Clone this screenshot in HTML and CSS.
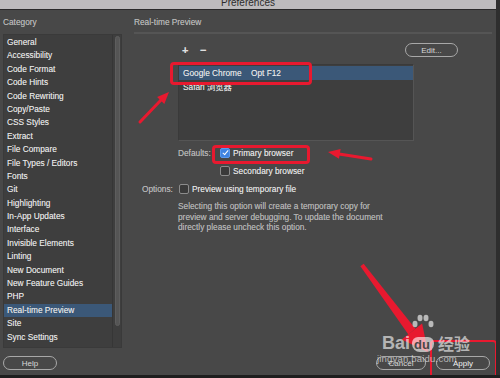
FILE: index.html
```html
<!DOCTYPE html>
<html lang="en">
<head>
    <meta charset="UTF-8">
    <meta name="viewport" content="width=device-width, initial-scale=1.0">
    <title>Preferences</title>
    <link rel="stylesheet" href="styles.css">
</head>
<body>
    <div class="window">
        <div class="titlebar"><span class="title-text">Preferences</span></div>

        <div class="content">
            <aside class="sidebar">
                <div class="pane-label">Category</div>
                <div class="category-box">
                    <ul class="category-list">
                        <li>General</li>
                        <li>Accessibility</li>
                        <li>Code Format</li>
                        <li>Code Hints</li>
                        <li>Code Rewriting</li>
                        <li>Copy/Paste</li>
                        <li>CSS Styles</li>
                        <li>Extract</li>
                        <li>File Compare</li>
                        <li>File Types / Editors</li>
                        <li>Fonts</li>
                        <li>Git</li>
                        <li>Highlighting</li>
                        <li>In-App Updates</li>
                        <li>Interface</li>
                        <li>Invisible Elements</li>
                        <li>Linting</li>
                        <li>New Document</li>
                        <li>New Feature Guides</li>
                        <li>PHP</li>
                        <li class="selected">Real-time Preview</li>
                        <li>Site</li>
                        <li>Sync Settings</li>
                    </ul>
                    <div class="scrollbar"><div class="scroll-thumb"></div></div>
                </div>
                <div class="sidebar-foot">
                    <button class="pill help-btn">Help</button>
                </div>
            </aside>

            <main class="panel">
                <div class="pane-label panel-label">Real-time Preview</div>
                <div class="panel-body">
                    <div class="browser-tools">
                        <span class="tool">+</span>
                        <span class="tool">&minus;</span>
                        <button class="pill edit-btn">Edit...</button>
                    </div>
                    <div class="browser-list">
                        <div class="browser-row selected">
                            <span class="browser-name">Google Chrome</span>
                            <span>Opt F12</span>
                        </div>
                        <div class="browser-row">
                            <span class="browser-name">Safari 浏览器</span>
                        </div>
                    </div>

                    <div class="form-row">
                        <span class="form-label defaults-label">Defaults:</span>
                        <span class="checkbox checked"></span>
                        <span>Primary browser</span>
                    </div>
                    <div class="form-row indent">
                        <span class="checkbox"></span>
                        <span>Secondary browser</span>
                    </div>
                    <div class="form-row options-row">
                        <span class="form-label options-label">Options:</span>
                        <span class="checkbox"></span>
                        <span>Preview using temporary file</span>
                    </div>
                    <p class="hint">
                        Selecting this option will create a temporary copy for<br>
                        preview and server debugging. To update the document<br>
                        directly please uncheck this option.
                    </p>
                </div>
                <div class="panel-foot">
                    <button class="pill cancel-btn">Cancel</button>
                    <button class="pill apply-btn">Apply</button>
                </div>
            </main>
        </div>

        <!-- annotations drawn over the dialog -->
        <div class="mark mark-chrome"></div>
        <div class="mark mark-primary"></div>
        <div class="mark mark-apply"></div>

        <svg class="arrows" width="500" height="378" viewBox="0 0 500 378">
            <line x1="140" y1="122" x2="161" y2="100" stroke="#e8192f" stroke-width="3" stroke-linecap="round"/>
            <polygon points="169,92 164.3,104.1 157.1,97.1" fill="#e8192f"/>
            <line x1="371" y1="159" x2="339" y2="154" stroke="#e8192f" stroke-width="3" stroke-linecap="round"/>
            <polygon points="328,152 340.6,149 339,158.8" fill="#e8192f"/>
            <polygon points="360.4,266.2 363.6,263.8 415.4,328.8 408.4,334.4" fill="#e8192f"/>
            <polygon points="428,352 401.7,339.6 422.1,323.6" fill="#e8192f"/>
        </svg>

        <div class="watermark">
            <div class="wm-logo">
                <span class="wm-bai">Bai</span>
                <svg class="wm-paw" width="22" height="26" viewBox="0 0 22 26">
                    <ellipse cx="3" cy="10" rx="2.5" ry="3.2"/>
                    <ellipse cx="8" cy="4" rx="2.5" ry="3.2"/>
                    <ellipse cx="14" cy="4" rx="2.5" ry="3.2"/>
                    <ellipse cx="19" cy="10" rx="2.5" ry="3.2"/>
                </svg>
                <span class="wm-du">du</span>
                <span class="wm-cn">经验</span>
            </div>
            <div class="wm-url">jingyan.baidu.com</div>
        </div>
    </div>
</body>
</html>
```

FILE: styles.css
```css
body {
    margin: 0;
    padding: 0;
    background: #1e1e1e;
    font-family: 'Liberation Sans', Arial, 'Noto Sans CJK SC', sans-serif;
    font-size: 8.3px;
    color: #e6e6e6;
    text-shadow: 0 0 0.4px rgba(255, 255, 255, 0.5);
}
.window {
    position: relative;
    width: 496px;
    height: 375px;
    background: #484848;
    border-right: 4px solid #2e2e2e;
    overflow: hidden;
}
.titlebar {
    height: 9px;
    background: #bdbbbd;
    border-bottom: 1px solid #2a2a2a;
    text-align: center;
    overflow: hidden;
    text-shadow: none;
}
.title-text {
    display: block;
    margin-top: -3px;
    line-height: 12px;
    font-size: 10px;
    color: #2c2c2c;
}
.content {
    display: flex;
    height: 365px;
    padding: 0 4px 5px 3px;
    box-sizing: border-box;
    gap: 12px;
}
.pane-label {
    height: 24px;
    padding-top: 6px;
    box-sizing: border-box;
    line-height: 13px;
    color: #b4b4b4;
}

/* sidebar */
.sidebar {
    width: 119px;
    display: flex;
    flex-direction: column;
}
.category-box {
    display: flex;
    height: 314px;
    background: #3e3e3e;
    border: 1px solid #3a3a3a;
    box-sizing: border-box;
}
.category-list {
    list-style: none;
    margin: 0;
    padding: 1px 0 0;
    flex: 1;
}
.category-list li {
    height: 13.4px;
    line-height: 13.4px;
    padding-left: 3px;
    white-space: nowrap;
}
.category-list li.selected {
    background: #3b5878;
}
.scrollbar {
    width: 9px;
    padding: 0 1px 0 2px;
    box-sizing: border-box;
    border-left: 1px solid #363636;
}
.scroll-thumb {
    height: 288px;
    margin-top: 1px;
    background: #555;
    border: 1px solid #5e5e5e;
    border-radius: 3px;
}
.sidebar-foot {
    margin-top: auto;
}
.pill {
    height: 14px;
    padding: 0;
    background: transparent;
    border: 1px solid #a8a8a8;
    border-radius: 7px;
    font-family: inherit;
    font-size: 8px;
    color: #d8d8d8;
    box-sizing: border-box;
}
.help-btn {
    width: 54px;
}

/* right panel */
.panel {
    flex: 1;
    display: flex;
    flex-direction: column;
}
.panel-label {
    border-bottom: 2px solid #555;
}
.panel-body {
    padding: 9px 0 0 44px;
    width: 280px;
}
.browser-tools {
    display: flex;
    align-items: center;
    height: 14px;
    padding-left: 4px;
}
.tool {
    width: 18px;
    font-size: 11px;
    font-weight: bold;
    color: #e0e0e0;
}
.edit-btn {
    margin-left: auto;
    width: 53px;
}
.browser-list {
    width: 236px;
    height: 77px;
    margin-top: 7px;
    padding-top: 1px;
    background: #3e3e3e;
    border: 1px solid #555;
    border-left-color: #3a3a3a;
    border-top-color: #3a3a3a;
    box-sizing: border-box;
}
.browser-row {
    display: flex;
    height: 14px;
    line-height: 14px;
    padding-left: 4px;
}
.browser-row.selected {
    background: #3b5878;
}
.browser-name {
    width: 68px;
}
.form-row {
    display: flex;
    align-items: center;
    height: 14px;
    margin-top: 5px;
}
.form-row:first-of-type {
    margin-top: 6px;
}
.form-label {
    color: #b4b4b4;
}
.defaults-label {
    width: 42px;
}
.indent {
    padding-left: 42px;
    margin-top: 4px;
}
.options-row {
    margin-left: -36px;
    margin-top: 4px;
}
.options-label {
    width: 37px;
}
.checkbox {
    width: 8px;
    height: 8px;
    margin-right: 3px;
    border: 1px solid #8c8c8c;
    border-radius: 2px;
    background: #3a3a3a;
}
.checkbox.checked {
    position: relative;
    background: #3f83e0;
    border-color: #5b9aee;
}
.checkbox.checked::after {
    content: "";
    position: absolute;
    left: 2.5px;
    top: 0;
    width: 2px;
    height: 5px;
    border: solid #fff;
    border-width: 0 1.5px 1.5px 0;
    transform: rotate(40deg);
}
.hint {
    margin: 5px 0 0;
    line-height: 10.5px;
    color: #b0b0b0;
    white-space: nowrap;
}
.panel-foot {
    margin-top: auto;
    display: flex;
    justify-content: flex-end;
    gap: 10px;
    padding-right: 2px;
}
.cancel-btn {
    width: 50px;
}
.apply-btn {
    width: 54px;
    color: #f0f0f0;
}

/* annotations */
.mark {
    position: absolute;
    border: 3px solid #e8192f;
    border-radius: 4px;
    box-sizing: border-box;
}
.mark-chrome {
    left: 170px;
    top: 62px;
    width: 142px;
    height: 23px;
}
.mark-primary {
    left: 212px;
    top: 145px;
    width: 98px;
    height: 19px;
}
.mark-apply {
    left: 430px;
    top: 340px;
    width: 67px;
    height: 44px;
    border-width: 2px;
}
.arrows {
    position: absolute;
    left: 0;
    top: 0;
}
.watermark {
    position: absolute;
    left: 377px;
    top: 321px;
    color: rgba(255, 255, 255, 0.62);
    text-shadow: none;
}
.wm-logo {
    display: flex;
    align-items: flex-end;
    height: 31px;
}
.wm-bai {
    font-size: 18px;
    font-weight: bold;
    line-height: 18px;
    margin-left: 5px;
}
.wm-paw {
    fill: rgba(255, 255, 255, 0.62);
    margin-bottom: 12px;
    margin-left: 2px;
}
.wm-du {
    font-size: 13px;
    font-weight: bold;
    line-height: 15px;
    margin-left: -22px;
    width: 22px;
    padding: 0 2px;
    box-sizing: border-box;
    background: rgba(255, 255, 255, 0.62);
    color: #484848;
    border-radius: 6px 6px 8px 8px;
}
.wm-cn {
    font-family: 'Noto Sans CJK SC', sans-serif;
    font-size: 16px;
    font-weight: bold;
    line-height: 18px;
    margin-left: 4px;
}
.wm-url {
    font-size: 9.5px;
    line-height: 10px;
    margin-top: 2px;
    letter-spacing: 0.2px;
}
```
